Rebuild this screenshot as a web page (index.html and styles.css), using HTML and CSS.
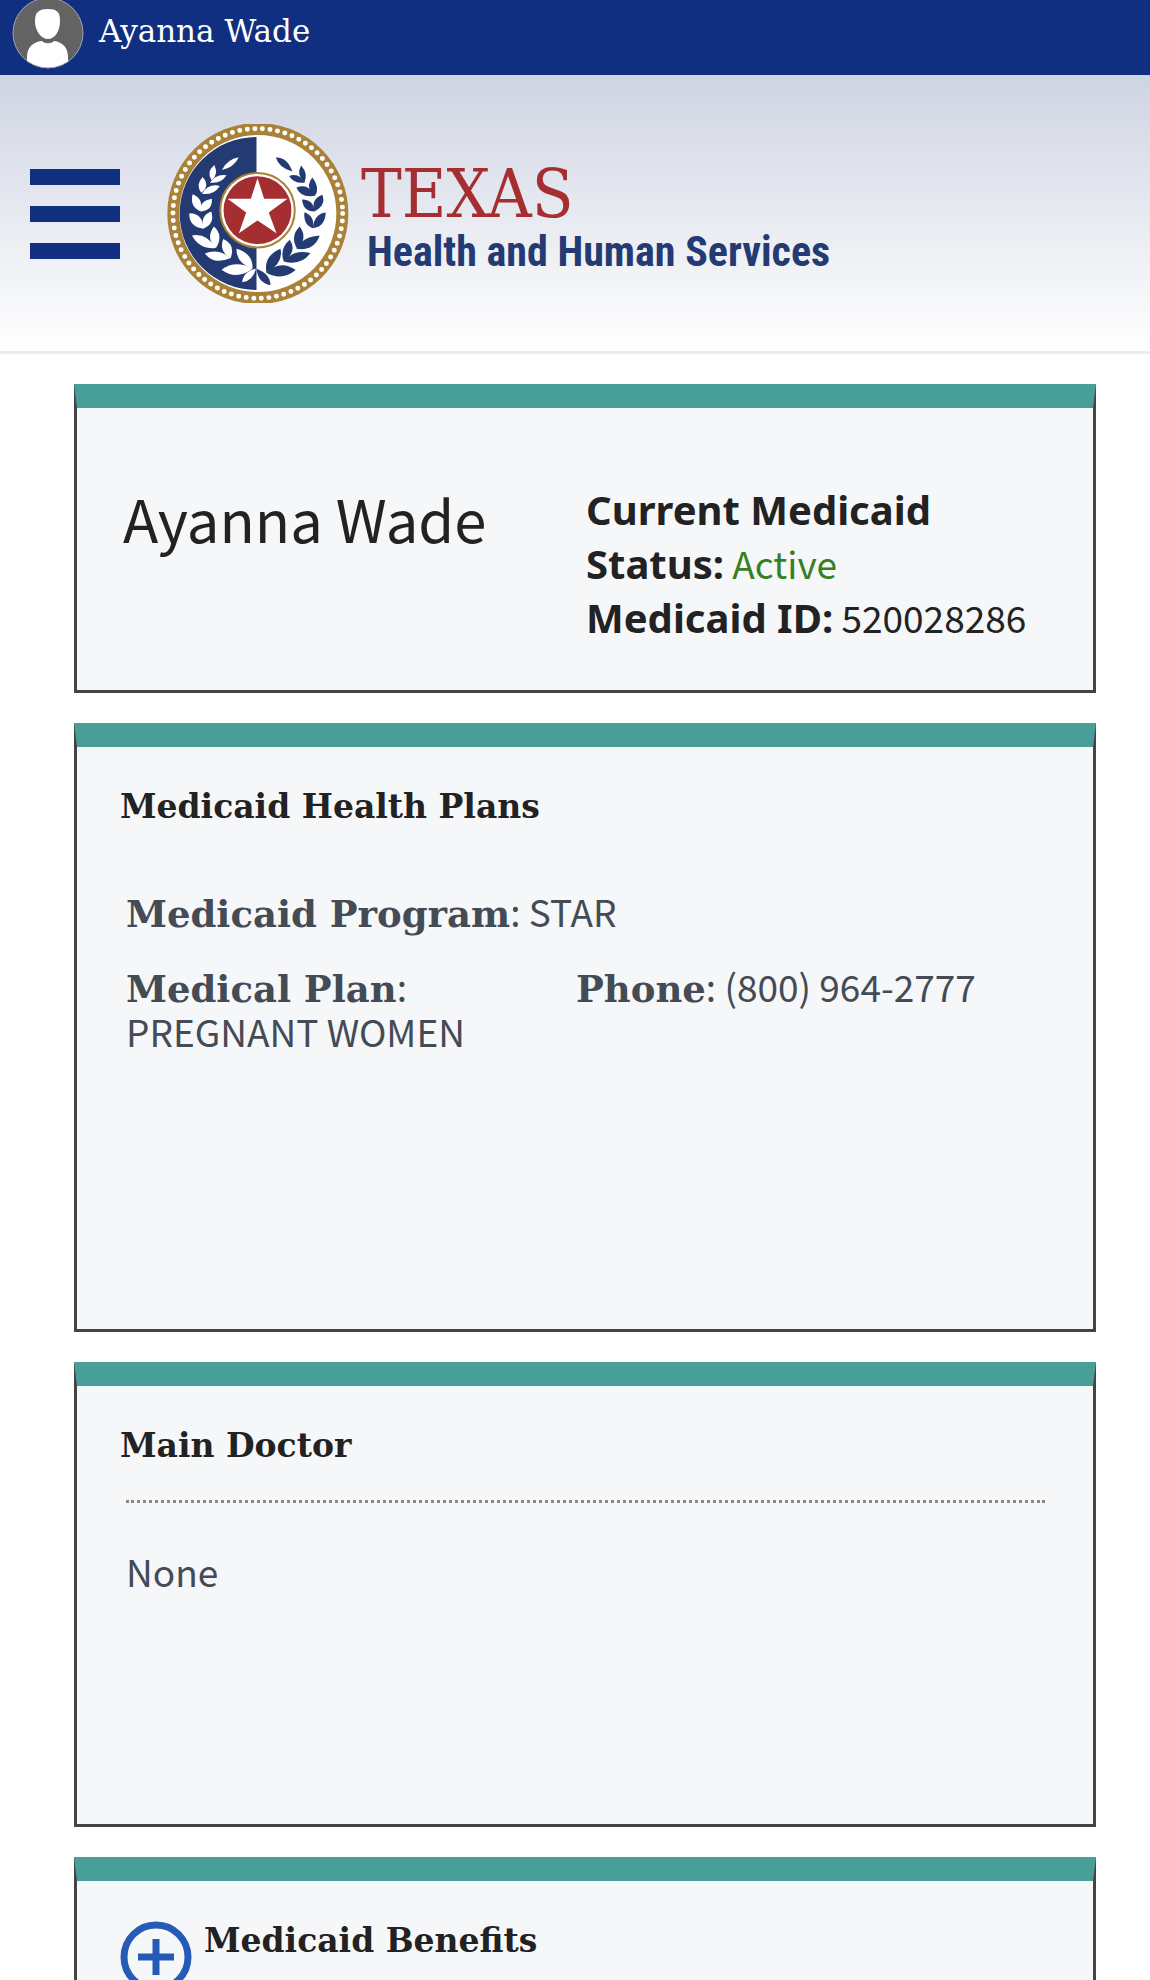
FILE: index.html
```
<!DOCTYPE html>
<html lang="en">

<head>
    <meta charset="UTF-8">
    <meta name="viewport" content="width=device-width, initial-scale=1.0">
    <title>Texas Health and Human Services</title>
    <link rel="stylesheet" href="styles.css">
</head>

<body>

    <!-- User bar -->
    <div class="user-bar">
        <svg class="avatar" viewBox="0 0 72 72" aria-hidden="true">
            <defs>
                <clipPath id="avatarClip"><circle cx="36" cy="36" r="35"/></clipPath>
            </defs>
            <circle cx="36" cy="36" r="35" fill="#636363"/>
            <g clip-path="url(#avatarClip)" fill="#fff">
                <path d="M36 12c9 0 12 3 12 12 0 10-5 18-12 18s-13-8-13-18c0-9 4-12 13-12z"/>
                <path d="M15 72V60c0-9 5-15 15-16 3 3 9 3 12 0 9 1 14 7 14 16v12z"/>
            </g>
            <circle cx="36" cy="36" r="35" fill="none" stroke="#a3a6b0"/>
        </svg>
        <span class="user-name">Ayanna Wade</span>
    </div>

    <!-- Site header -->
    <header class="site-header">
        <button class="menu-button" aria-label="Menu">
            <span></span>
            <span></span>
            <span></span>
        </button>
        <a class="logo" href="#">
            <svg class="seal" viewBox="21 27 547 538" aria-hidden="true">
                <circle cx="294" cy="296" r="254" fill="#fff" stroke="#a98238" stroke-width="36"/>
                <circle cx="294" cy="296" r="255" fill="none" stroke="#fff" stroke-width="15" stroke-linecap="round" stroke-dasharray="0 22.9"/>
                <path d="M290 66a231 230 0 0 0 0 460z" fill="#243a73"/>
                <!-- left branch -->
                <g fill="#fff">
                    <path d="M237 127Q202 133 186 165Q221 159 237 127z"/>
                    <path d="M163 150Q138 172 155 196Q178 178 163 150z"/>
                    <path d="M200 181Q168 176 150 203Q182 208 200 181z"/>
                    <path d="M128 186Q106 210 124 234Q152 212 128 186z"/>
                    <path d="M180 213Q144 205 126 237Q162 241 180 213z"/>
                    <path d="M98 238Q88 274 122 290Q132 252 98 238z"/>
                    <path d="M156 252Q118 258 122 290Q158 288 156 252z"/>
                    <path d="M88 295Q86 334 130 342Q130 296 88 295z"/>
                    <path d="M154 290Q120 302 130 342Q166 326 154 290z"/>
                    <path d="M96 362Q118 404 168 400Q140 354 96 362z"/>
                    <path d="M162 335Q136 370 168 400Q192 362 162 335z"/>
                    <path d="M135 416Q160 452 213 430Q174 400 135 416z"/>
                    <path d="M190 373Q176 410 212 430Q228 390 190 373z"/>
                    <path d="M185 465Q230 498 278 462Q228 434 185 465z"/>
                    <path d="M230 402Q228 444 278 462Q280 416 230 402z"/>
                    <path d="M288 462Q250 470 247 503Q280 498 288 462z"/>
                </g>
                <!-- right branch -->
                <g fill="#243a73">
                    <path d="M348 128Q382 126 398 170Q358 160 348 128z"/>
                    <path d="M424 152Q446 176 434 202Q408 180 424 152z"/>
                    <path d="M388 183Q418 172 436 203Q404 208 388 183z"/>
                    <path d="M458 188Q482 218 466 243Q434 218 458 188z"/>
                    <path d="M410 218Q446 204 466 243Q422 250 410 218z"/>
                    <path d="M488 240Q500 272 464 290Q452 254 488 240z"/>
                    <path d="M427 254Q462 254 464 290Q430 290 427 254z"/>
                    <path d="M498 293Q496 336 460 340Q462 298 498 293z"/>
                    <path d="M434 292Q466 304 460 340Q430 330 434 292z"/>
                    <path d="M480 363Q462 410 410 402Q430 364 480 363z"/>
                    <path d="M420 335Q446 372 412 402Q390 364 420 335z"/>
                    <path d="M452 415Q424 454 372 440Q402 402 452 415z"/>
                    <path d="M390 375Q414 410 372 440Q358 402 390 375z"/>
                    <path d="M408 466Q366 500 320 474Q362 434 408 466z"/>
                    <path d="M362 402Q372 446 320 474Q310 424 362 402z"/>
                    <path d="M290 462Q332 478 332 512Q294 504 290 462z"/>
                </g>
                <circle cx="293" cy="286" r="112" fill="#fff" stroke="#a98238" stroke-width="6"/>
                <circle cx="293" cy="286" r="102" fill="#a52e30"/>
                <path d="M293 190l20 62h70l-56 41 23 62-57-38-56 38 22-62-56-41h70z" fill="#fff"/>
            </svg>
            <span class="logo-text">
                <span class="logo-state">TEXAS</span>
                <span class="logo-agency">Health and Human Services</span>
            </span>
        </a>
    </header>

    <main class="cards">

        <section class="card summary">
            <h1 class="member-name">Ayanna Wade</h1>
            <div class="member-status">
                <div><b>Current Medicaid Status:</b> <span class="active">Active</span></div>
                <div><b>Medicaid ID:</b> <span>520028286</span></div>
            </div>
        </section>

        <section class="card plans">
            <h2>Medicaid Health Plans</h2>
            <div class="card-body plan-grid">
                <div class="program"><b>Medicaid Program</b>: STAR</div>
                <div><b>Medical Plan</b>:<br>PREGNANT WOMEN</div>
                <div><b>Phone</b>: (800) 964-2777</div>
            </div>
        </section>

        <section class="card doctor">
            <h2>Main Doctor</h2>
            <div class="card-body doctor-info">None</div>
        </section>

        <section class="card benefits">
            <button class="expand-button" aria-label="Expand Medicaid Benefits">
                <svg viewBox="0 0 72 72" fill="none" stroke="#265bb5">
                    <circle cx="36" cy="36" r="32" stroke-width="7"/>
                    <path d="M36 18v36M18 36h36" stroke-width="7"/>
                </svg>
            </button>
            <h2>Medicaid Benefits</h2>
        </section>

    </main>

</body>

</html>
```
FILE: styles.css
```
* {
    box-sizing: border-box;
}

body {
    margin: 0;
    background-color: #fff;
    color: #222;
    font-family: "Noto Sans CJK JP", "Open Sans", sans-serif;
}

button {
    padding: 0;
    border: none;
    background: none;
    cursor: pointer;
}

/* User bar */
.user-bar {
    display: flex;
    align-items: center;
    gap: 15px;
    height: 75px;
    padding: 0 12px 9px;
    background-color: #102f80;
    color: #fff;
}

.avatar {
    width: 72px;
    height: 72px;
    flex-shrink: 0;
}

.user-name {
    font-family: "Roboto Slab", "DejaVu Serif", serif;
    font-size: 31px;
    line-height: 40px;
    padding-bottom: 4px;
}

/* Site header */
.site-header {
    display: flex;
    align-items: center;
    gap: 47px;
    padding: 49px 30px 48px;
    border-bottom: 3px solid #ececec;
    background: linear-gradient(#cfd4e2, #fff);
}

.menu-button {
    display: flex;
    flex-direction: column;
    justify-content: space-between;
    width: 90px;
    height: 90px;
    flex-shrink: 0;
}

.menu-button span {
    height: 16px;
    background-color: #102f80;
}

.logo {
    display: flex;
    align-items: center;
    gap: 12px;
    text-decoration: none;
}

.seal {
    width: 182px;
    height: 179px;
    flex-shrink: 0;
}

.logo-text {
    display: flex;
    flex-direction: column;
    padding-top: 16px;
}

.logo-state {
    color: #a52e30;
    font-family: "Roboto Slab", "DejaVu Serif Condensed", "DejaVu Serif", serif;
    font-size: 68px;
    line-height: 60px;
}

.logo-agency {
    padding-left: 6px;
    color: #243a73;
    font-family: "Roboto Condensed", "Noto Sans CJK JP", sans-serif;
    font-size: 42px;
    font-weight: bold;
    line-height: 56px;
    white-space: nowrap;
}

/* Cards */
.cards {
    display: flex;
    flex-direction: column;
    gap: 30px;
    padding: 30px 54px 30px 74px;
}

.card {
    padding: 40px 48px 30px 43px;
    border: 3px solid #444;
    border-top: 24px solid #489f98;
    background-color: #f6f7f9;
}

.card h2 {
    margin: 0;
    font-family: "Roboto Slab", "DejaVu Serif", serif;
    font-size: 33px;
    line-height: 40px;
}

.card-body {
    margin-left: 6px;
    color: #444b55;
    font-size: 37px;
    line-height: 45px;
}

.card-body b {
    font-family: "Roboto Slab", "DejaVu Serif", serif;
    line-height: 1;
}

/* Member summary */
.summary {
    display: grid;
    grid-template-columns: 463px 1fr;
    padding: 74px 40px 46px 46px;
}

.member-name {
    margin: 0;
    font-size: 58px;
    font-weight: normal;
    line-height: 72px;
}

.member-status {
    font-size: 37px;
    line-height: 54px;
}

.member-status b {
    font-family: "Noto Sans", "Open Sans", sans-serif;
    font-size: 40px;
    line-height: 1;
}

.active {
    color: #37801f;
}

/* Health plans */
.plans {
    min-height: 609px;
}

.plan-grid {
    display: grid;
    grid-template-columns: 450px 1fr;
    row-gap: 30px;
    margin-top: 62px;
}

.program {
    grid-column: 1 / -1;
}

/* Main doctor */
.doctor {
    min-height: 465px;
}

.doctor-info {
    margin-top: 34px;
    padding-top: 46px;
    border-top: 3px dotted #888;
}

/* Benefits */
.benefits {
    display: flex;
    align-items: flex-start;
    gap: 12px;
}

.expand-button {
    width: 72px;
    height: 72px;
}

.expand-button svg {
    display: block;
}
```
